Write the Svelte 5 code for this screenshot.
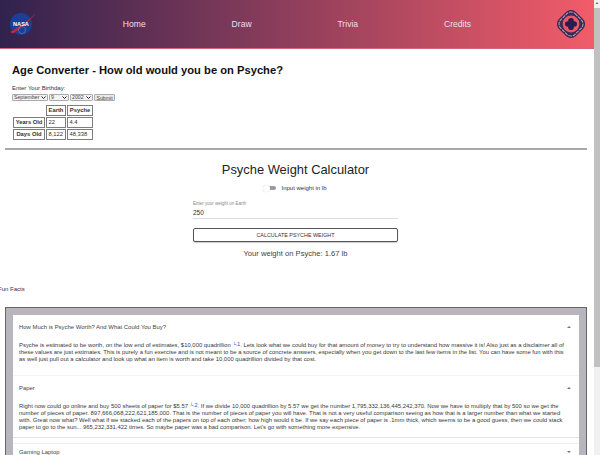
<script>
    const links = ['Home', 'Draw', 'Trivia', 'Credits'];

    let weight = 250;
    // Psyche surface gravity compared to earth
    $: psycheWeight = (weight * 0.00668).toFixed(2);

    const ageRows = [
        { label: 'Years Old', earth: '22', psyche: '4.4' },
        { label: 'Days Old', earth: '8,122', psyche: '48,338' }
    ];
</script>

<div class="page">
    <div class="content">
        <header class="topbar">
            <svg class="nasa" viewBox="0 0 30 26" width="30" height="26" aria-label="NASA">
                <circle cx="14" cy="13" r="11" fill="#1b3f94" />
                <path d="M3 21 C11 17 20 11 29 2 C23 10 14 17 6 22.5 Z" fill="#c8283a" />
                <circle cx="15" cy="19" r="3.5" fill="none" stroke="#8fa6d8" stroke-width="0.4" />
                <text x="14" y="15" class="nasa-text">NASA</text>
            </svg>
            {#each links as link}
                <a href="#top" class="nav-link">{link}</a>
            {/each}
            <svg viewBox="0 0 28 28" width="28" height="28" aria-label="Psyche">
                <rect x="2" y="2" width="24" height="24" rx="7" transform="rotate(45 14 14)" fill="#3d2a55" />
                <rect x="3.8" y="3.8" width="20.4" height="20.4" rx="5.8" transform="rotate(45 14 14)" fill="none" stroke="#b9a6b8" stroke-width="1" stroke-dasharray="3.4 0.9" />
                <circle cx="14" cy="14" r="8.4" fill="#e85a68" />
                <circle cx="14" cy="10.8" r="2.8" fill="#2b1c4c" />
                <circle cx="14" cy="17.2" r="2.8" fill="#2b1c4c" />
                <circle cx="10.8" cy="14" r="2.8" fill="#2b1c4c" />
                <circle cx="17.2" cy="14" r="2.8" fill="#2b1c4c" />
                <circle cx="14" cy="14" r="3" fill="#2b1c4c" />
            </svg>
        </header>

        <section class="age">
            <h1>Age Converter - How old would you be on Psyche?</h1>
            <p class="birthday">Enter Your Birthday:</p>
            <div class="date-form">
                <select class="month"><option>September</option></select>
                <select class="day"><option>9</option></select>
                <select class="year"><option>2002</option></select>
                <button class="submit">Submit</button>
            </div>
            <table>
                <colgroup>
                    <col class="col-label" />
                    <col class="col-earth" />
                    <col class="col-psyche" />
                </colgroup>
                <thead>
                    <tr>
                        <td class="blank"></td>
                        <th>Earth</th>
                        <th>Psyche</th>
                    </tr>
                </thead>
                <tbody>
                    {#each ageRows as row}
                        <tr>
                            <th>{row.label}</th>
                            <td>{row.earth}</td>
                            <td>{row.psyche}</td>
                        </tr>
                    {/each}
                </tbody>
            </table>
        </section>

        <hr />

        <section class="calculator">
            <h2>Psyche Weight Calculator</h2>
            <div class="toggle-row">
                <span class="toggle"><span class="thumb"></span></span>
                <span>Input weight in lb</span>
            </div>
            <div class="field">
                <label for="weight">Enter your weight on Earth</label>
                <input id="weight" bind:value={weight} />
            </div>
            <button class="calculate">Calculate Psyche Weight</button>
            <p class="result">Your weight on Psyche: {psycheWeight} lb</p>
        </section>

        <p class="fun-title">Fun Facts</p>

        <div class="facts">
            <div class="panel">
                <div class="panel-head">
                    <span>How Much is Psyche Worth? And What Could You Buy?</span>
                    <svg class="chev" viewBox="0 0 6 4" width="6" height="4"><path d="M1 3 L3 1 L5 3 Z" fill="#777" /></svg>
                </div>
                <p class="panel-body">Psyche is estimated to be worth, on the low end of estimates, $10,000 quadrillion <a href="#top" class="ref">└.1</a>. Lets look what we could buy for that amount of money to try to understand how massive it is! Also just as a disclaimer all of these values are just estimates. This is purely a fun exercise and is not meant to be a source of concrete answers, especially when you get down to the last few items in the list. You can have some fun with this as well just pull out a calculator and look up what an item is worth and take 10,000 quadrillion divided by that cost.</p>
            </div>
            <div class="panel last">
                <div class="panel-head">
                    <span>Paper</span>
                    <svg class="chev" viewBox="0 0 6 4" width="6" height="4"><path d="M1 3 L3 1 L5 3 Z" fill="#777" /></svg>
                </div>
                <p class="panel-body">Right now could go online and buy 500 sheets of paper for $5.57 <a href="#top" class="ref">└.2</a>. If we divide 10,000 quadrillion by 5.57 we get the number 1,795,332,136,445,242,370. Now we have to multiply that by 500 so we get the number of pieces of paper. 897,666,068,222,621,185,000. That is the number of pieces of paper you will have. That is not a very useful comparison seeing as how that is a larger number than what we started with. Great now what? Well what if we stacked each of the papers on top of each other; how high would it be. If we say each piece of paper is .1mm thick, which seems to be a good guess, then we could stack paper to go to the sun... 965,232,331,422 times. So maybe paper was a bad comparison. Let's go with something more expensive.</p>
            </div>
            <div class="panel collapsed">
                <div class="panel-head">
                    <span>Gaming Laptop</span>
                    <svg class="chev" viewBox="0 0 6 4" width="6" height="4"><path d="M1 1 L3 3 L5 1 Z" fill="#777" /></svg>
                </div>
            </div>
        </div>
    </div>

    <div class="scrollbar">
        <svg viewBox="0 0 6 6" width="6" height="6"><path d="M1.5 4 L3 2 L4.5 4 Z" fill="#777" /></svg>
        <div class="scroll-thumb"></div>
    </div>
</div>

<style>
    :global(body) {
        font-family: "Liberation Sans", Arial, sans-serif;
        color: #222;
        background: #fff;
    }

    .page {
        display: flex;
        height: 455px;
        overflow: hidden;
    }

    .content {
        flex: 1;
        min-width: 0;
    }

    .topbar {
        height: 48px;
        padding: 0 9px 0 7px;
        display: flex;
        align-items: center;
        justify-content: space-between;
        background: linear-gradient(90deg, #30224e 0%, #f25c69 100%);
        border-bottom: 1px solid #d8627a;
    }

    .nasa-text {
        font-size: 5.6px;
        font-weight: bold;
        fill: #fff;
        text-anchor: middle;
    }

    .nav-link {
        color: #ecdfee;
        font-size: 8.6px;
        text-decoration: none;
    }

    .age {
        padding: 14px 12px 0;
    }

    h1 {
        margin: 0;
        font-size: 11.2px;
        line-height: 15px;
        color: #111;
    }

    .birthday {
        margin: 6px 0 0;
        font-size: 6px;
        line-height: 8px;
        color: #333;
    }

    .date-form {
        display: flex;
        gap: 1px;
        margin-top: 2px;
        height: 7px;
    }

    select, .submit {
        font: 5.2px "Liberation Sans", Arial, sans-serif;
        height: 7px;
        padding: 0;
        margin: 0;
        box-sizing: border-box;
        border: 1px solid #aaa;
        border-radius: 1px;
        background-color: #f2f2f2;
        color: #444;
    }

    select {
        appearance: none;
        padding-left: 1px;
        line-height: 5px;
        background-image: url("data:image/svg+xml,%3Csvg xmlns='http://www.w3.org/2000/svg' width='5' height='3'%3E%3Cpath d='M.5 .5 L2.5 2.5 L4.5 .5' fill='none' stroke='%23222' stroke-width='1'/%3E%3C/svg%3E");
        background-repeat: no-repeat;
        background-position: right 1px center;
    }

    .month { width: 36px; }
    .day { width: 20px; }
    .year { width: 23px; }
    .submit { width: 21px; background-color: #ececec; }

    table {
        margin-top: 3px;
        border-spacing: 1px;
        border-collapse: separate;
        table-layout: fixed;
        width: 79px;
        font-size: 5.8px;
    }

    .col-label { width: 32px; }
    .col-earth { width: 20px; }
    .col-psyche { width: 26px; }

    th, td {
        border: 1px solid #7d7d7d;
        height: 9px;
        padding: 0 1.5px;
        line-height: 9px;
        text-align: left;
        color: #333;
        white-space: nowrap;
    }

    th {
        text-align: center;
    }

    .blank {
        border: none;
    }

    hr {
        height: 2px;
        margin: 7px 7px 0 5px;
        border: none;
        background: #a8a8a8;
    }

    .calculator {
        width: 205px;
        margin-left: 193px;
        padding-top: 11px;
        display: flex;
        flex-direction: column;
    }

    h2 {
        margin: 0;
        font-size: 12.9px;
        font-weight: normal;
        line-height: 17px;
        text-align: center;
        color: #222;
        white-space: nowrap;
    }

    .toggle-row {
        display: flex;
        align-items: center;
        justify-content: center;
        gap: 5px;
        margin-top: 6px;
        font-size: 6px;
        line-height: 8px;
        color: #333;
    }

    .toggle {
        position: relative;
        width: 12px;
        height: 4px;
        border-radius: 2px;
        background: #9a9a9a;
    }

    .thumb {
        position: absolute;
        left: -1px;
        top: -1.5px;
        width: 7px;
        height: 7px;
        border-radius: 50%;
        background: #fff;
        box-shadow: 0 0 1px #bbb;
    }

    .field {
        display: flex;
        flex-direction: column;
        margin-top: 9px;
    }

    label {
        font-size: 4.5px;
        line-height: 5px;
        color: #888;
    }

    input {
        font: 6.5px "Liberation Sans", Arial, sans-serif;
        height: 12px;
        padding: 0;
        border: none;
        border-bottom: 1.5px solid #ddd;
        color: #333;
        outline: none;
    }

    .calculate {
        margin-top: 8.5px;
        height: 14px;
        padding: 0;
        border: 1px solid #555;
        border-radius: 2px;
        background: #fff;
        font: 5.4px "Liberation Sans", Arial, sans-serif;
        text-transform: uppercase;
        color: #333;
        box-shadow: 0 1px 1px #ccc;
    }

    .result {
        margin: 7px 0 0;
        font-size: 7.6px;
        line-height: 10px;
        text-align: center;
        color: #444;
        white-space: nowrap;
    }

    .fun-title {
        margin: 26px 0 0 -2px;
        font-size: 6px;
        line-height: 8px;
        color: #333;
    }

    .facts {
        margin: 14.5px 7px 0 5px;
        padding: 7px;
        border: 1px solid #666;
        background: #b8b5bd;
    }

    .panel {
        background: #fff;
        padding: 0 10px 0 6px;
        border-bottom: 1px solid #f4f4f4;
    }

    .panel.last {
        border-bottom: 1px solid #e4e4e4;
    }

    .panel.last .panel-body {
        padding-bottom: 5.5px;
    }

    .panel.collapsed {
        padding-top: 5px;
        background: linear-gradient(#fff 5px, #eee 5px, #eee 6px, #fff 6px);
    }

    .panel.collapsed .panel-head {
        height: 18px;
    }

    .panel-head {
        height: 24px;
        display: flex;
        align-items: center;
        justify-content: space-between;
        font-size: 5.95px;
        color: #444;
    }

    .chev {
        margin-right: -3px;
    }

    .panel-body {
        margin: 0;
        padding: 3px 0 12px;
        font-size: 5.92px;
        line-height: 7px;
        color: #383838;
    }

    .ref {
        color: #2a35d8;
        text-decoration: none;
        font-size: 5px;
        vertical-align: 1.5px;
        line-height: 0;
    }

    .scrollbar {
        width: 6px;
        flex: none;
        background: #f1f1f1;
        display: flex;
        flex-direction: column;
    }

    .scroll-thumb {
        height: 359px;
        margin-top: 2px;
        background: #c1c1c1;
    }
</style>
